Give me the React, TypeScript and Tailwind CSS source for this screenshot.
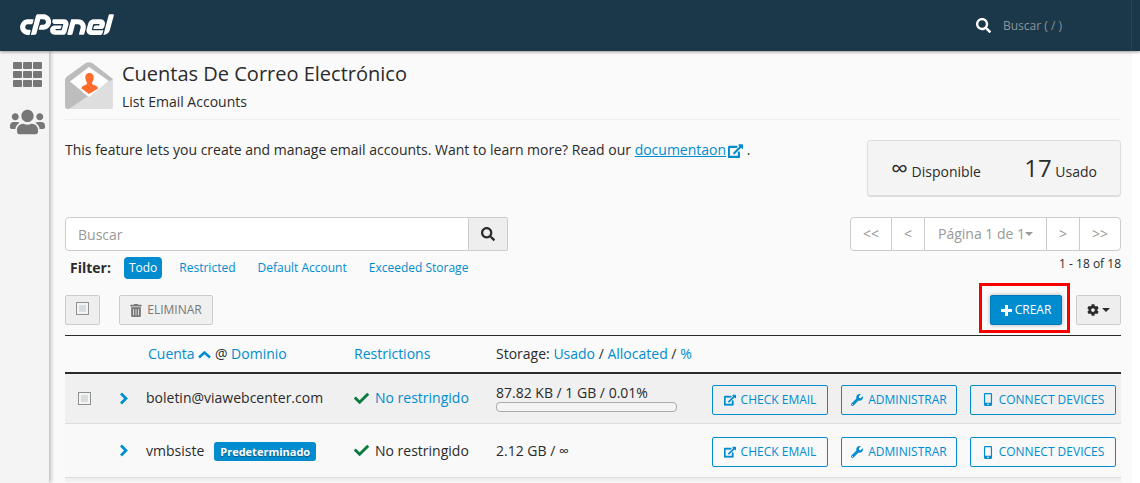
import React, { useState } from 'react';
import {
  FaCheck,
  FaCog,
  FaCpanel,
  FaMobileAlt,
  FaSearch,
  FaTrashAlt,
  FaUsers,
  FaWrench,
} from 'react-icons/fa';

interface Account {
  id: string;
  email: string;
  isDefault: boolean;
  storage: string;
  percent: number | null;
}

const accounts: Account[] = [
  {
    id: 'boletin',
    email: 'boletin@viawebcenter.com',
    isDefault: false,
    storage: '87.82 KB / 1 GB / 0.01%',
    percent: 0.01,
  },
  {
    id: 'vmbsiste',
    email: 'vmbsiste',
    isDefault: true,
    storage: '2.12 GB / ∞',
    percent: null,
  },
];

const filters = ['Todo', 'Restricted', 'Default Account', 'Exceeded Storage'];

const checkbox =
  'block h-[13px] w-[13px] appearance-none border border-[#8e8f8f] bg-[#d8dcdf] shadow-[inset_0_0_0_2px_#f4f4f4] checked:bg-[#008ccf]';

function EmailIcon() {
  return (
    <svg width="48" height="48" viewBox="0 0 48 48" aria-hidden="true" className="shrink-0">
      <path d="M0 18 Q0 16 2 14.500 L20 1.500 Q24 -1 28 1.500 L48 17 V30 H0 Z" fill="#bdbdbd" />
      <path d="M0 17 L24 35 L4 47 H3 Q0 47 0 44 Z" fill="#bdbdbd" />
      <path d="M48 17 V45 Q48 47 46 47 H4 Z" fill="#dedede" />
      <path d="M24 5 L44 19 L24 35 L5 19.500 Z" fill="#fff" />
      <path
        d="M24.500 11 C28 11 29 13.500 28.500 17 C28 19 27 20 27 22 C29 23.500 33 23.500 33 26.500 L24 32 L16.500 26.500 C16.500 23.500 20 23.500 22 22 C22 20 21 19 20.500 17 C20 13.500 21 11 24.500 11 Z"
        fill="#ff6c2c"
      />
    </svg>
  );
}

function GridIcon() {
  return (
    <svg width="29" height="25" viewBox="0 0 29 25" fill="currentColor" aria-hidden="true">
      {[0, 9, 18].map((y) =>
        [0, 10, 20].map((x) => <rect key={`${x}-${y}`} x={x} y={y} width="9" height="7" rx="1" />),
      )}
    </svg>
  );
}

function ExternalLinkIcon({ className }: { className: string }) {
  return (
    <svg viewBox="0 0 576 512" fill="currentColor" aria-hidden="true" className={className}>
      <path d="M576 24v127.984c0 21.461-25.960 31.980-40.971 16.971l-35.707-35.709-243.523 243.523c-9.373 9.373-24.568 9.373-33.941 0l-22.627-22.627c-9.373-9.373-9.373-24.569 0-33.941L442.756 76.676l-35.703-35.705C391.982 25.900 402.656 0 424.024 0H552c13.255 0 24 10.745 24 24zM407.029 270.794l-16 16A23.999 23.999 0 0 0 384 303.765V448H64V128h264a24.003 24.003 0 0 0 16.970-7.029l16-16C376.089 89.851 365.381 64 344 64H48C21.490 64 0 85.490 0 112v352c0 26.510 21.490 48 48 48h352c26.510 0 48-21.490 48-48V287.764c0-21.382-25.852-32.090-40.971-16.970z" />
      <path d="M32 96 H330 M416 290 V480 H32 V96" fill="none" stroke="currentColor" strokeWidth="80" />
    </svg>
  );
}

function PlusIcon() {
  return (
    <svg width="11" height="11" viewBox="0 0 11 11" fill="currentColor" aria-hidden="true">
      <path d="M4 0 H7 V4 H11 V7 H7 V11 H4 V7 H0 V4 H4 Z" />
    </svg>
  );
}

function Caret() {
  return (
    <svg width="8" height="4" viewBox="0 0 8 4" fill="currentColor" aria-hidden="true">
      <path d="M0 0 H8 L4 4 Z" />
    </svg>
  );
}

function Chevron({ up = false }: { up?: boolean }) {
  return up ? (
    <svg width="13" height="9" viewBox="0 0 13 9" className="inline-block" aria-hidden="true">
      <path d="M1 6.500 L6.500 1.500 L12 6.500" fill="none" stroke="#008ccf" strokeWidth="2.500" />
    </svg>
  ) : (
    <svg width="9" height="13" viewBox="0 0 9 13" aria-hidden="true">
      <path d="M2 1.500 L7 6.500 L2 11.500" fill="none" stroke="#008ccf" strokeWidth="2.700" />
    </svg>
  );
}

function Header() {
  return (
    <header className="relative z-10 flex h-[51px] items-center justify-between bg-[#1b374a] pl-5 pr-2 shadow-[0_1px_3px_rgba(0,0,0,0.4)]">
      <a href="#" aria-label="cPanel" className="text-white">
        <FaCpanel className="h-[75px] w-[94px]" />
      </a>
      <label className="flex items-center gap-3 border-r border-[#24465b] text-white">
        <FaSearch className="h-[15px] w-[15px]" />
        <input
          type="text"
          placeholder="Buscar ( / )"
          aria-label="Buscar en cPanel"
          className="h-[51px] w-32 bg-transparent text-[12px] outline-none placeholder:text-[#8b9499]"
        />
      </label>
    </header>
  );
}

function Sidebar() {
  return (
    <nav className="flex w-[49px] shrink-0 flex-col items-center gap-[21px] bg-[#f4f4f4] pt-[11px] pl-[6px] text-[#777] shadow-[1px_0_5px_rgba(0,0,0,0.35)]">
      <a href="#" aria-label="Inicio">
        <GridIcon />
      </a>
      <a href="#" aria-label="Usuarios">
        <FaUsers className="h-7 w-[35px]" />
      </a>
    </nav>
  );
}

function Pagination() {
  const item = 'h-8 border-l border-[#ccc] text-[#999] first:border-l-0';

  return (
    <div className="text-right">
      <div className="flex rounded border border-[#ccc] bg-white text-[14px]">
        <button className={`${item} w-10`}>&lt;&lt;</button>
        <button className={`${item} w-[33px]`}>&lt;</button>
        <button className={`${item} flex w-[122px] items-center justify-center`}>
          Página 1 de 1
          <Caret />
        </button>
        <button className={`${item} w-[33px]`}>&gt;</button>
        <button className={`${item} w-[41px]`}>&gt;&gt;</button>
      </div>
      <p className="mt-[3px] text-[12px] leading-5">1 - 18 of 18</p>
    </div>
  );
}

function AccountRow({ account }: { account: Account }) {
  const action =
    'flex h-[30px] items-center justify-center gap-[5px] rounded-xs border border-[#008ccf] text-[12px] text-[#008ccf]';

  return (
    <tr className="h-[51px] border-b border-[#ddd] odd:bg-[#f0f0f0] even:h-[54px] even:bg-[#f9f9f9]">
      <td className="pl-[13px]">
        {!account.isDefault && <input type="checkbox" aria-label={account.email} className={checkbox} />}
      </td>
      <td>
        <button aria-label="Expandir" className="flex items-center">
          <Chevron />
        </button>
      </td>
      <td className="whitespace-nowrap">
        {account.email}
        {account.isDefault && (
          <span className="ml-[10px] inline-block rounded-[3px] bg-[#008ccf] px-[6px] text-[11px] leading-[19px] font-bold text-white [text-shadow:0_1px_1px_rgba(0,0,0,0.4)]">
            Predeterminado
          </span>
        )}
      </td>
      <td>
        <span className="flex items-center gap-[6px]">
          <FaCheck className="h-[15px] w-[15px] text-[#0a7b3e]" />
          <span className={account.isDefault ? '' : 'text-[#008ccf]'}>No restringido</span>
        </span>
      </td>
      <td>
        <div className="leading-[17px]">{account.storage}</div>
        {account.percent !== null && (
          <div className="mt-px h-[10px] w-[181px] overflow-hidden rounded-[4px] border border-[#aaa] bg-[#f4f4f4]">
            <div className="h-full bg-[#008ccf]" style={{ width: `${account.percent}%` }} />
          </div>
        )}
      </td>
      <td className="pt-[3px]">
        <div className="flex justify-end gap-[13px] pr-[5px]">
          <button className={`${action} w-[116px]`}>
            <ExternalLinkIcon className="h-3 w-3" /> CHECK EMAIL
          </button>
          <button className={`${action} w-[116px]`}>
            <FaWrench className="h-3 w-3" /> ADMINISTRAR
          </button>
          <button className={`${action} w-[146px]`}>
            <FaMobileAlt className="h-[13px] w-3" /> CONNECT DEVICES
          </button>
        </div>
      </td>
    </tr>
  );
}

function AccountTable() {
  const link = 'text-[#008ccf]';

  return (
    <table className="w-full table-fixed border-collapse border-t border-[#2b2b2b]">
      <colgroup>
        <col className="w-[54px]" />
        <col className="w-[27px]" />
        <col className="w-[208px]" />
        <col className="w-[142px]" />
        <col className="w-[205px]" />
        <col />
      </colgroup>
      <thead>
        <tr className="h-[37px] border-b-2 border-[#2b2b2b] text-left">
          <th />
          <th />
          <th className="pl-[2px] font-normal">
            <a href="#" className={link}>
              Cuenta <Chevron up />
            </a>{' '}
            @{' '}
            <a href="#" className={link}>
              Dominio
            </a>
          </th>
          <th className="font-normal">
            <a href="#" className={link}>
              Restrictions
            </a>
          </th>
          <th className="font-normal whitespace-nowrap">
            Storage:{' '}
            <a href="#" className={link}>
              Usado
            </a>{' '}
            /{' '}
            <a href="#" className={link}>
              Allocated
            </a>{' '}
            /{' '}
            <a href="#" className={link}>
              %
            </a>
          </th>
          <th />
        </tr>
      </thead>
      <tbody>
        {accounts.map((account) => (
          <AccountRow key={account.id} account={account} />
        ))}
      </tbody>
    </table>
  );
}

function App() {
  const [activeFilter, setActiveFilter] = useState('Todo');

  return (
    <div className="flex min-h-screen flex-col bg-white font-['Open_Sans','Noto_Sans',sans-serif] text-[14px] leading-5 text-[#2b2b2b]">
      <Header />
      <div className="mr-2 flex flex-1 bg-[#fafafa]">
        <Sidebar />
        <main className="min-w-0 flex-1 pr-[11px] pl-4">
          <div className="flex gap-[9px] border-b border-[#eee] pt-[11px] pb-[7px]">
            <EmailIcon />
            <div>
              <h1 className="text-[20px] leading-6">Cuentas De Correo Electrónico</h1>
              <p className="mt-[6px]">List Email Accounts</p>
            </div>
          </div>

          <div className="flex items-start justify-between pt-5">
            <p>
              This feature lets you create and manage email accounts. Want to learn more? Read our{' '}
              <a href="#" className="text-[#008ccf]">
                <span className="underline">documentaon</span>
                <ExternalLinkIcon className="ml-[2px] inline h-[14px] w-[15px]" />
              </a>{' '}
              .
            </p>
            <div className="flex h-[57px] w-[254px] items-baseline justify-between rounded border border-b-2 border-[#ddd] bg-[#f4f4f4] px-[23px] pt-[11px]">
              <div>
                <span className="text-[24px] leading-8">∞</span> Disponible
              </div>
              <div>
                <span className="text-[24px] leading-8">17</span> Usado
              </div>
            </div>
          </div>

          <div className="mt-5 flex items-start justify-between">
            <div>
              <div className="flex w-[443px]">
                <input
                  type="text"
                  placeholder="Buscar"
                  aria-label="Buscar"
                  className="h-[34px] min-w-0 flex-1 rounded-l border border-[#ccc] bg-white px-3 outline-none placeholder:text-[#999]"
                />
                <button
                  aria-label="Buscar cuentas"
                  className="flex w-[39px] items-center justify-center rounded-r-xs border border-l-0 border-[#ccc] bg-[#eee]"
                >
                  <FaSearch className="h-[14px] w-[14px]" />
                </button>
              </div>
              <div className="mt-[6px] flex items-center gap-3 pl-[5px]">
                <span className="mr-px font-bold">Filter:</span>
                {filters.map((filter) => (
                  <button
                    key={filter}
                    onClick={() => setActiveFilter(filter)}
                    className={`h-[22px] rounded px-[5px] text-[12px] ${
                      filter === activeFilter ? 'bg-[#008ccf] text-white' : 'text-[#008ccf]'
                    }`}
                  >
                    {filter}
                  </button>
                ))}
              </div>
            </div>
            <Pagination />
          </div>

          <div className="mt-4 mb-[10px] flex items-center justify-between">
            <div className="flex gap-[19px]">
              <label className="flex h-[30px] w-[35px] items-center justify-center rounded-xs border border-[#ccc] bg-[#eee] pb-1">
                <input type="checkbox" aria-label="Seleccionar todo" className={checkbox} />
              </label>
              <button className="flex h-[30px] w-[94px] items-center justify-center gap-[5px] rounded-xs border border-[#ccc] bg-[#f0f0f0] text-[12px] text-[#777]">
                <FaTrashAlt className="h-[13px] w-3" /> ELIMINAR
              </button>
            </div>
            <div className="flex items-center gap-[14px]">
              <div className="relative">
                <button className="flex h-[30px] w-[72px] items-center justify-center gap-[3px] rounded-xs border border-[#007cb8] bg-[#008ccf] text-[12px] text-white shadow-[0_0_4px_rgba(0,0,0,0.3)]">
                  <PlusIcon /> CREAR
                </button>
                {/* callout frame around the create button */}
                <div className="pointer-events-none absolute -top-3 -right-2 -bottom-2 -left-[11px] border-3 border-[#f80000]" />
              </div>
              <button
                aria-label="Opciones"
                className="flex h-[30px] w-[45px] items-center justify-center gap-[3px] rounded-xs border border-[#ccc] bg-[#eee]"
              >
                <FaCog className="h-3 w-3" />
                <Caret />
              </button>
            </div>
          </div>

          <AccountTable />
          <div className="h-1 bg-[#f0f0f0]" />
        </main>
      </div>
    </div>
  );
}

export default App;
